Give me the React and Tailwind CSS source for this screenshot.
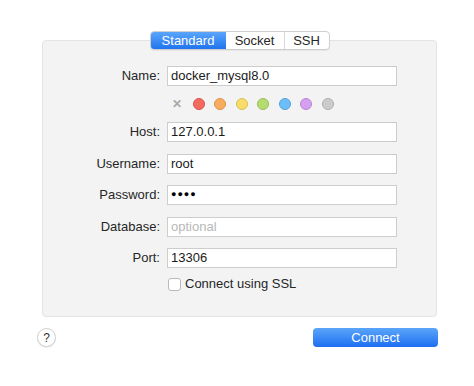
import React from "react";

const font = { fontFamily: '"Liberation Sans", Arial, sans-serif' };

const colors = [
  ["bg-[#f46b5e]", "border-[#d9534a]"],
  ["bg-[#f6ad5f]", "border-[#dd9447]"],
  ["bg-[#f8dd6c]", "border-[#dcc04f]"],
  ["bg-[#b5dc70]", "border-[#98c055]"],
  ["bg-[#6dbdf8]", "border-[#53a2dc]"],
  ["bg-[#d6a0f1]", "border-[#b985d6]"],
  ["bg-[#cbcbcb]", "border-[#aeaeae]"],
];

const Row = ({ label, children }) => (
  <div className="flex items-center h-[20px]">
    <div className="w-[124px] pr-[7px] text-right text-[13px] text-[#262626]">
      {label}
    </div>
    {children}
  </div>
);

const Field = ({ value, placeholder }) => (
  <div className="w-[230px] h-[20px] bg-white border border-[#cdcdcd] flex items-center px-[3px] text-[13px] text-[#1a1a1a]">
    {value ? value : <span className="text-[#b8b8b8]">{placeholder}</span>}
  </div>
);

export default function App() {
  return (
    <div className="w-[474px] h-[386px] bg-white pt-[40px] px-[37px]" style={font}>
      <div className="ml-[5px] w-[395px] h-[277px] bg-[#f3f3f3] border border-[#e4e4e4] rounded-[4px] flex flex-col">
        <div className="flex justify-center -mt-[10px]">
          <div className="flex h-[19px] text-[13px] rounded-[4px] border border-[#cfcfcf] bg-white shadow-[0_1px_0_rgba(0,0,0,0.05)] overflow-hidden">
            <div className="w-[75px] flex items-center justify-center text-white bg-gradient-to-b from-[#5aa5fa] to-[#1f74ee]">
              Standard
            </div>
            <div className="w-[59px] flex items-center justify-center text-[#262626] border-r border-[#d6d6d6]">
              Socket
            </div>
            <div className="w-[44px] flex items-center justify-center text-[#262626]">
              SSH
            </div>
          </div>
        </div>

        <div className="mt-[16px] flex flex-col">
          <Row label="Name:">
            <Field value="docker_mysql8.0" />
          </Row>

          <div className="flex items-center h-[12px] mt-[12px] pl-[128px] gap-[9.5px]">
            <span className="w-[12px] text-center text-[12px] font-bold text-[#a9a9a9] leading-none">
              ✕
            </span>
            {colors.map(([bg, bd], i) => (
              <span
                key={i}
                className={`w-[12px] h-[12px] rounded-full border ${bg} ${bd}`}
              />
            ))}
          </div>

          <div className="mt-[12px] flex flex-col gap-[11.5px]">
            <Row label="Host:">
              <Field value="127.0.0.1" />
            </Row>
            <Row label="Username:">
              <Field value="root" />
            </Row>
            <Row label="Password:">
              <Field
                value={
                  <span className="text-[9px] tracking-[1px] text-black">
                    ●●●●
                  </span>
                }
              />
            </Row>
            <Row label="Database:">
              <Field placeholder="optional" />
            </Row>
            <Row label="Port:">
              <Field value="13306" />
            </Row>
          </div>

          <div className="mt-[9px] flex items-center pl-[125px] h-[14px]">
            <span className="w-[13px] h-[13px] bg-white border border-[#b9b9b9] rounded-[3px]" />
            <span className="ml-[4px] text-[13px] text-[#262626]">
              Connect using SSL
            </span>
          </div>
        </div>
      </div>

      <div className="mt-[11px] flex items-center justify-between">
        <div className="w-[19px] h-[19px] rounded-full bg-white border border-[#cfcfcf] shadow-[0_1px_1px_rgba(0,0,0,0.08)] flex items-center justify-center text-[12px] text-[#333]">
          ?
        </div>
        <div className="w-[125px] h-[19px] -mr-[1px] rounded-[4px] bg-gradient-to-b from-[#5aa5fa] to-[#1d6ef0] text-white text-[13px] flex items-center justify-center">
          Connect
        </div>
      </div>
    </div>
  );
}
